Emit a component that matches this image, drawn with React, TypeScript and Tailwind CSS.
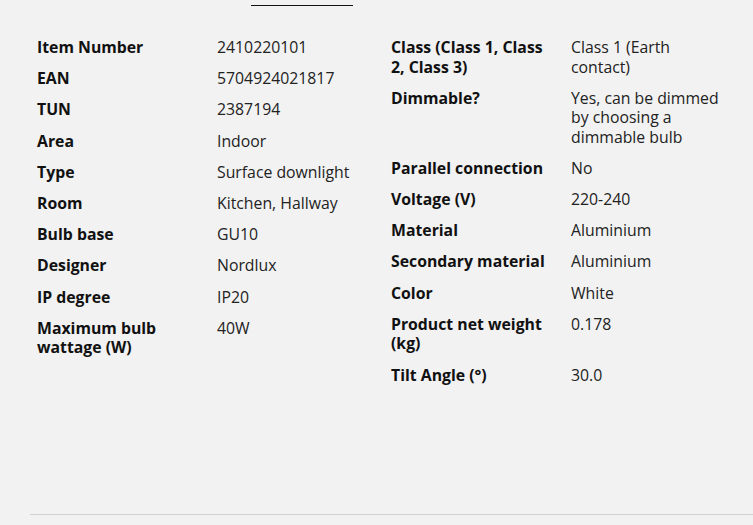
const left: [string, string][] = [
  ["Item Number", "2410220101"],
  ["EAN", "5704924021817"],
  ["TUN", "2387194"],
  ["Area", "Indoor"],
  ["Type", "Surface downlight"],
  ["Room", "Kitchen, Hallway"],
  ["Bulb base", "GU10"],
  ["Designer", "Nordlux"],
  ["IP degree", "IP20"],
  ["Maximum bulb wattage (W)", "40W"],
]

const right: [string, string][] = [
  ["Class (Class 1, Class 2, Class 3)", "Class 1 (Earth contact)"],
  ["Dimmable?", "Yes, can be dimmed by choosing a dimmable bulb"],
  ["Parallel connection", "No"],
  ["Voltage (V)", "220-240"],
  ["Material", "Aluminium"],
  ["Secondary material", "Aluminium"],
  ["Color", "White"],
  ["Product net weight (kg)", "0.178"],
  ["Tilt Angle (°)", "30.0"],
]

function SpecList({ rows }: { rows: [string, string][] }) {
  return (
    <dl className="flex flex-col gap-y-[11.7px]">
      {rows.map(([k, v]) => (
        <div key={k} className="grid grid-cols-[180px_157px]">
          <dt className="font-bold text-[#111] pr-5">{k}</dt>
          <dd className="text-[#222]">{v}</dd>
        </div>
      ))}
    </dl>
  )
}

export default function App() {
  return (
    <div className="h-[525px] w-[753px] overflow-hidden bg-[#f2f2f2] font-['Open_Sans',sans-serif] text-[15.8px] leading-[19.5px]">
      <div className="ml-[251px] mt-[5px] h-px w-[102px] bg-[#111]" />
      <div className="grid grid-cols-[354px_354px] pl-[37px] pt-[32px]">
        <SpecList rows={left} />
        <SpecList rows={right} />
      </div>
      <div className="ml-[30px] mt-[129px] h-px bg-[#d0d0d0]" />
    </div>
  )
}
